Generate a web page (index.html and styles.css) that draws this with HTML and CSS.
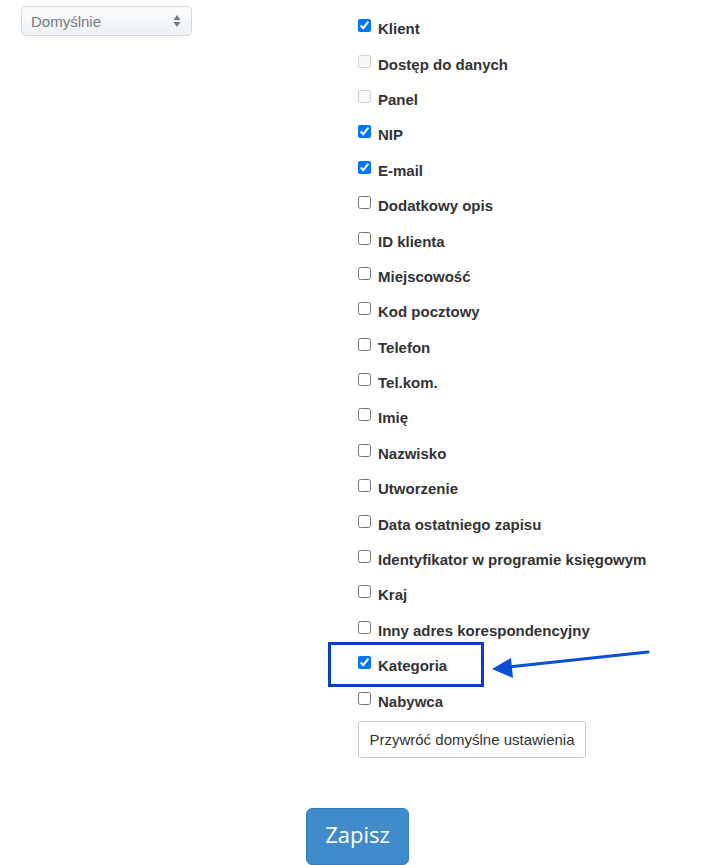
FILE: index.html
```html
<!DOCTYPE html>
<html lang="pl">
<head>
<meta charset="utf-8">
<link rel="stylesheet" href="styles.css">
</head>
<body>
<div class="page">
  <div class="layout">
    <div class="left">
      <div class="select">
        <span class="select-text">Domyślnie</span>
        <svg class="select-arrows" width="8" height="14" viewBox="0 0 8 14"><path d="M4 1 L7.5 6 H0.5 Z" fill="#777"/><path d="M4 13 L7.5 8 H0.5 Z" fill="#777"/></svg>
      </div>
    </div>
    <div class="right">
      <label class="row"><input type="checkbox" checked><span>Klient</span></label>
      <label class="row"><input type="checkbox" disabled><span>Dostęp do danych</span></label>
      <label class="row"><input type="checkbox" disabled><span>Panel</span></label>
      <label class="row"><input type="checkbox" checked><span>NIP</span></label>
      <label class="row"><input type="checkbox" checked><span>E-mail</span></label>
      <label class="row"><input type="checkbox"><span>Dodatkowy opis</span></label>
      <label class="row"><input type="checkbox"><span>ID klienta</span></label>
      <label class="row"><input type="checkbox"><span>Miejscowość</span></label>
      <label class="row"><input type="checkbox"><span>Kod pocztowy</span></label>
      <label class="row"><input type="checkbox"><span>Telefon</span></label>
      <label class="row"><input type="checkbox"><span>Tel.kom.</span></label>
      <label class="row"><input type="checkbox"><span>Imię</span></label>
      <label class="row"><input type="checkbox"><span>Nazwisko</span></label>
      <label class="row"><input type="checkbox"><span>Utworzenie</span></label>
      <label class="row"><input type="checkbox"><span>Data ostatniego zapisu</span></label>
      <label class="row"><input type="checkbox"><span>Identyfikator w programie księgowym</span></label>
      <label class="row"><input type="checkbox"><span>Kraj</span></label>
      <label class="row"><input type="checkbox"><span>Inny adres korespondencyjny</span></label>
      <label class="row highlighted"><input type="checkbox" checked><span>Kategoria</span>
        <svg class="arrow" width="170" height="50" viewBox="0 0 170 50"><line x1="156" y1="20" x2="16" y2="35" stroke="#0b4fd4" stroke-width="3" stroke-linecap="round"/><path d="M0 37 L19 26 L21 46 Z" fill="#0b4fd4"/></svg>
      </label>
      <label class="row"><input type="checkbox"><span>Nabywca</span></label>
      <button class="btn-default" type="button">Przywróć domyślne ustawienia</button>
    </div>
  </div>
  <div class="actions">
    <button class="btn-primary" type="button">Zapisz</button>
  </div>
</div>
</body>
</html>
```

FILE: styles.css
```css
html, body {
  margin: 0;
  padding: 0;
  background: #fff;
}
body {
  font-family: "Liberation Sans", Arial, sans-serif;
  color: #333;
  font-size: 15px;
}
.page {
  width: 716px;
  height: 865px;
  overflow: hidden;
}
.layout {
  display: grid;
  grid-template-columns: 358px 1fr;
}
.left {
  padding: 6px 0 0 21px;
}
.select {
  box-sizing: border-box;
  width: 171px;
  height: 30px;
  border: 1px solid #d3d9df;
  border-radius: 5px;
  background: linear-gradient(#fbfcfd, #eef2f5);
  display: flex;
  align-items: center;
  justify-content: space-between;
  padding: 0 10px 0 9px;
}
.select-text {
  font-family: "Liberation Sans", Arial, sans-serif;
  font-size: 15px;
  color: #767b80;
}
.select-arrows {
  display: block;
}
.right {
  padding-top: 11px;
  display: flex;
  flex-direction: column;
  align-items: flex-start;
}
.row {
  height: 35.4px;
  display: flex;
  align-items: center;
  font-weight: bold;
  font-size: 15px;
  color: #333;
  position: relative;
}
.row input {
  margin: 0 7px 0 0;
  width: 13px;
  height: 13px;
  position: relative;
  top: -3px;
}
.highlighted::before {
  content: "";
  position: absolute;
  left: -30px;
  top: -6px;
  width: 150px;
  height: 39px;
  border: 3px solid #0a40c8;
}
.arrow {
  position: absolute;
  left: 134px;
  top: -16px;
}
.btn-default {
  margin-top: 2px;
  height: 37px;
  width: 228px;
  box-sizing: border-box;
  border: 1px solid #ccc;
  border-radius: 3px;
  background: #fff;
  font-family: "Liberation Sans", Arial, sans-serif;
  font-size: 15px;
  color: #333;
  padding: 0 10px;
}
.actions {
  display: flex;
  padding-left: 306px;
  padding-top: 50px;
}
.btn-primary {
  width: 103px;
  height: 57px;
  box-sizing: border-box;
  background: #428bca;
  border: 1px solid #357ebd;
  border-radius: 6px;
  color: #fff;
  font-family: "Open Sans", sans-serif;
  font-size: 22px;
  padding: 0 0 4px 0;
}
```
